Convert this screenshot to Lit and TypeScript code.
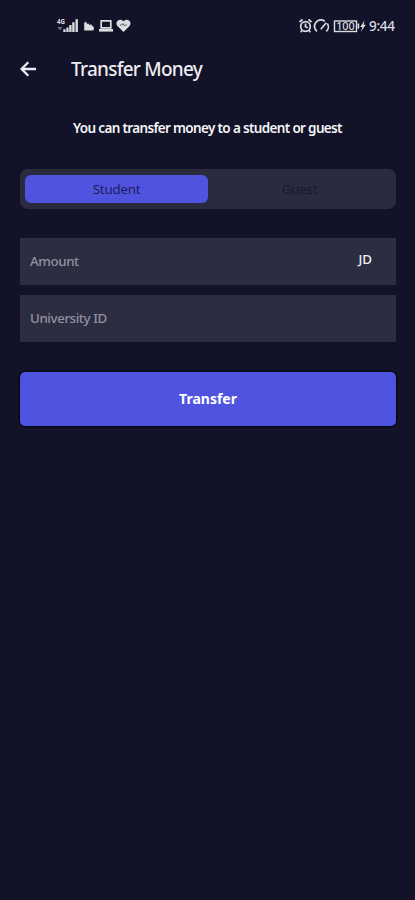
import { LitElement, html, css } from "lit";
import { customElement, property, state } from "lit/decorators.js";
import { classMap } from "lit/directives/class-map.js";

@customElement("status-bar")
class StatusBar extends LitElement {
  static styles = css`
    :host {
      display: flex;
      box-sizing: border-box;
      justify-content: space-between;
      align-items: flex-start;
      height: 36px;
      padding: 16px 19px 0 56px;
      color: #dcdce2;
    }
    svg { display: block; overflow: visible; }
    .row { display: flex; }
    .net { font: 700 7px "Noto Sans", sans-serif; }
    .level { font: 500 11px "Noto Sans", sans-serif; }
    .time {
      font: 500 13.5px/21px "Noto Sans", sans-serif;
      letter-spacing: -0.3px;
      width: 27px;
      white-space: nowrap;
    }
  `;
  render() {
    return html`
      <svg width="76" height="20" viewBox="0 0 76 20" fill="currentColor">
        <text class="net" x="1" y="8" textLength="8" lengthAdjust="spacingAndGlyphs">4G</text>
        <path opacity=".45" d="M1.5 11h5L4 14.500z" />
        <path d="M7.300 13.200h2.300V16H7.300zM10.300 11.500h2.300V16h-2.300zM13.200 9h2.400v7h-2.400zM16.200 6.200h2.400V16h-2.400zM19.500 3.200h2.400V16h-2.400z" />
        <path d="M28.200 14.600V7l1.600-1.400 1.300 2.300 1-.6 1.600 2 1.300-1.200 1.200 2 1 .2.9 2-.9 2.300z" />
        <path fill="none" stroke="currentColor" stroke-width="1.700" d="M45.200 4.800h9.600v7h-9.600z" />
        <path d="M43 13h14v2.600H43z" />
        <path d="M67.500 16 61.700 10.300C58.500 7 62 2.300 66 4.200l1.500 1 1.500-1c4-1.900 7.500 2.800 4.300 6.100z" />
        <path fill="none" stroke="#62626e" stroke-width="1" d="M64 9h2l1-1.500L68.500 10l1-1H71" />
      </svg>
      <div class="row">
        <svg width="71" height="20" viewBox="0 0 71 20" fill="none" stroke="currentColor" stroke-width="1.700">
          <circle cx="7.500" cy="10.500" r="4.800" />
          <path d="M1.500 6 4.500 3.500M13.500 6l-3-2.500M7.500 7.500v3.200l2.200 1M4 14.500l-1.300 1.700M11 14.500l1.300 1.700" />
          <path d="M19 15.300A5.900 5.900 0 0 1 26.700 5.200M29.300 7.500a5.900 5.900 0 0 1-1 7.800M22.800 13.200l5.500-6.400" />
          <rect x="36.500" y="5" width="22" height="10.500" stroke-width="1.400" />
          <path d="M60.400 7.500v5" />
          <text class="level" x="38.200" y="14.300" fill="currentColor" stroke="none" textLength="18.500" lengthAdjust="spacingAndGlyphs">100</text>
          <path fill="currentColor" stroke="none" d="m66.500 4.500-4.300 6.500h2.200l-1.600 4.800 5-7h-2.200z" />
        </svg>
        <span class="time">9:44</span>
      </div>
    `;
  }
}

@customElement("form-field")
class FormField extends LitElement {
  @property() label = "";
  @property() unit = "";
  static styles = css`
    :host {
      display: flex;
      justify-content: space-between;
      box-sizing: border-box;
      height: 47px;
      padding: 0 24px 0 10px;
      background: #2d2d42;
      font: 500 13.3px/47px "Noto Sans", sans-serif;
      letter-spacing: -0.4px;
      color: #9292a0;
    }
    .unit { color: #f0f0f5; letter-spacing: 0; line-height: 43px; }
  `;
  render() {
    return html`<span>${this.label}</span><span class="unit">${this.unit}</span>`;
  }
}

@customElement("app-root")
class AppRoot extends LitElement {
  @state() private recipient = "Student";

  static styles = css`
    :host {
      display: block;
      box-sizing: border-box;
      height: 900px;
      overflow: hidden;
      background: #121228;
      border-bottom: 1px solid #1b0c24;
      font-family: "Noto Sans", sans-serif;
    }
    header {
      display: flex;
      align-items: center;
      height: 66px;
      padding-left: 20px;
      gap: 34px;
      color: #ededf1;
    }
    header svg { display: block; }
    h1 { margin: 0; font-size: 19px; font-weight: 500; letter-spacing: -0.75px; white-space: nowrap; }
    .hint {
      margin: 16px 0 0;
      text-align: center;
      font-size: 13.5px;
      font-weight: 600;
      line-height: 20px;
      letter-spacing: -0.66px;
      color: #f4f4f7;
      white-space: nowrap;
    }
    main { padding: 0 19px 0 20px; }
    .tabs {
      display: flex;
      box-sizing: border-box;
      height: 40px;
      margin-top: 31px;
      padding: 6px 5px;
      border-radius: 8px;
      background: #2b2b40;
    }
    .tab {
      flex: 1;
      border: 0;
      padding: 0;
      border-radius: 6px;
      background: none;
      font: 400 13.3px/27px "Noto Sans", sans-serif;
      letter-spacing: -0.2px;
      color: #18182b;
    }
    .active { background: #5053e0; color: #1e1d5c; }
    .fields { display: flex; flex-direction: column; gap: 10px; margin-top: 29px; }
    .submit {
      display: block;
      width: 100%;
      height: 54px;
      margin-top: 30px;
      padding: 0;
      border: 0;
      border-radius: 5px;
      background: #5053e0;
      box-shadow: 0 0 0 1.5px #07071a;
      color: #fff;
      font: 700 14px/54px "Noto Sans", sans-serif;
    }
  `;

  render() {
    return html`
      <status-bar></status-bar>
      <header>
        <svg width="17" height="16" viewBox="0 0 17 16" fill="none" stroke="currentColor" stroke-width="2.3">
          <path d="M16 8H2M8.300 1.300 1.600 8l6.700 6.700" />
        </svg>
        <h1>Transfer Money</h1>
      </header>
      <p class="hint">You can transfer money to a student or guest</p>
      <main>
        <div class="tabs">
          ${["Student", "Guest"].map(
            (name) => html`<button
              class=${classMap({ tab: true, active: this.recipient === name })}
              @click=${() => (this.recipient = name)}
            >${name}</button>`
          )}
        </div>
        <div class="fields">
          <form-field label="Amount" unit="JD"></form-field>
          <form-field label="University ID"></form-field>
        </div>
        <button class="submit">Transfer</button>
      </main>
    `;
  }
}
